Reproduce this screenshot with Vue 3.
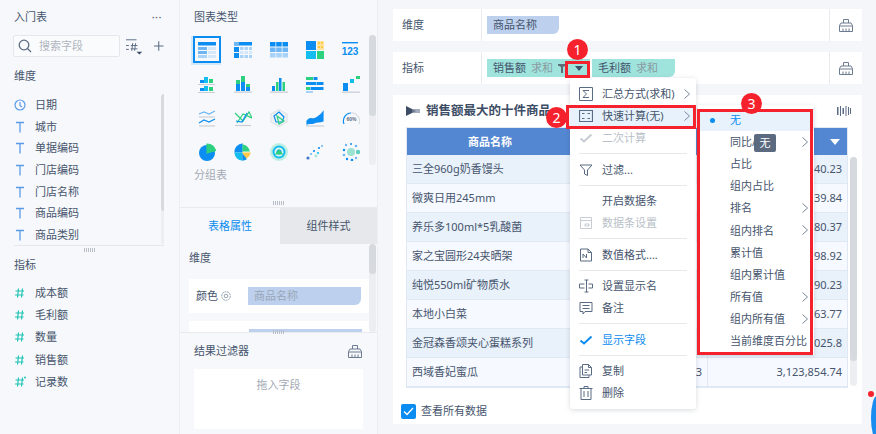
<script setup>
const B = '#0b8df2'
const L = '#a8d2f7'
const M = '#6db6f3'
const P = '#d5e8fa'
const G = '#2dd07f'
const C = '#14bdf0'
const Y = '#ffc94a'
const S = '#c9ced6'

const dims = ['日期', '城市', '单据编码', '门店编码', '门店名称', '商品编码', '商品类别']
const measures = ['成本额', '毛利额', '数量', '销售额', '记录数']

const charts = [
  { r: [[0, 1, 18, 3.5, B], [0, 6, 9, 3, M], [0, 10, 9, 3, M], [0, 14, 9, 3, L], [10, 6, 8, 3, P], [10, 10, 8, 3, P], [10, 14, 8, 3, P]] },
  { r: [[0, 1, 18, 3.5, B], [0, 1, 5, 3.5, M], [0, 6, 5, 5, B], [0, 12, 5, 5, B], [6, 6, 3.5, 3, L], [10.5, 6, 3.5, 3, L], [15, 6, 3, 3, L], [6, 10, 3.5, 3, P], [10.5, 10, 3.5, 3, P], [15, 10, 3, 3, P], [6, 14, 3.5, 3, L], [10.5, 14, 3.5, 3, L], [15, 14, 3, 3, L]] },
  { r: [[0, 1, 5.5, 4.5, B], [6.2, 1, 5.5, 4.5, B], [12.5, 1, 5.5, 4.5, B], [0, 6.5, 5.5, 4.5, M], [6.2, 6.5, 5.5, 4.5, M], [12.5, 6.5, 5.5, 4.5, M], [0, 12, 5.5, 4.5, L], [6.2, 12, 5.5, 4.5, L], [12.5, 12, 5.5, 4.5, L]] },
  { r: [[0, 0, 10, 9, B], [11, 0, 7, 9, '#ffe39a'], [12, 1, 2, 2, Y], [15, 1, 2, 2, Y], [12, 5, 2, 2, Y], [15, 5, 2, 2, Y], [0, 10, 10, 8, C], [11, 10, 7, 8, G]] },
  { r: [[0, 1, 16, 1.4, B]], t: '123' },
  { r: [[2, 5, 4, 3, B], [6, 2, 4, 6, C], [11, 4, 4, 4, G], [0, 9, 17, 1, S], [2, 13, 4, 3, B], [6, 11, 4, 5, C], [11, 12, 4, 4, G], [0, 17, 17, 1, S]] },
  { r: [[2, 9, 4, 7, B], [2, 5, 4, 4, G], [7, 7, 4, 9, B], [7, 1, 4, 6, G], [12, 12, 4, 4, B], [12, 9, 4, 3, G], [0, 16.5, 18, 1.3, S]] },
  { r: [[2, 11, 3, 5, B], [6, 7, 2.5, 9, G], [9, 3, 2.5, 13, B], [12.5, 7, 2.5, 9, G], [0, 16.5, 18, 1.3, S]] },
  { r: [[0, 2, 7, 3, G], [7.5, 2, 4, 3, B], [0, 7, 10, 3, B], [10.5, 7, 7, 3, B], [0, 12, 4, 3, G], [4.5, 12, 13, 3, B], [0, 16, 7, 2, L]] },
  { r: [[1, 8, 5, 8, B], [8, 4, 4, 4, C], [14, 1, 4, 3, G], [0, 16.5, 18, 1.3, S]] },
  { p: [['M1 5 L6 3 L11 5 L17 2', '#6db6f3', 'none'], ['M1 8 H17', S, 'none'], ['M1 14 L6 11 L11 13 L17 10', B, 'none'], ['M1 17 H17', S, 'none']] },
  { p: [['M1 4 L9 12 L15 3 L18 9 L9 5 L3 14', G, 'none'], ['M2 12 L8 13 L13 4', B, 'none'], ['M1 16.5 H17', S, 'none']] },
  { p: [['M9 0.5 L17 5 V13 L9 17.5 L1 13 V5 Z', '#dfe3e8', '#eef0f3'], ['M9 3 L14 8 L12 13 L6 13 L4 7 Z', B, 'none'], ['M7 7 L14 12 L9 15 Z', G, 'none']] },
  { p: [['M1 12 C4 7 7 12 10 9 C13 7 15 6 17 3 V12 C13 14 11 12 8 14 C5 15 3 14 1 15 Z', B, B], ['M0 17 H18', S, 'none']] },
  { p: [['M2 15 A8 8 0 0 1 9 4', B, 'none'], ['M9 4 A8 8 0 0 1 17 15', '#d8dde3', 'none']], t2: '60%' },
  { c: [[9, 10, 8, B]], p: [['M9 10 V1 A9 9 0 0 1 17.5 7.5 Z', G, G]] },
  { p: [['M8 1 V9 H1 A8 8 0 0 1 8 1 Z', B, B], ['M9 2 A8 8 0 0 1 15 8 H9 Z', G, G], ['M1 10 H8 V17 A8 8 0 0 1 1 10 Z', C, C], ['M9 10 H16 A7 7 0 0 1 12 15 Z', Y, Y], ['M9 12 L12 16 A6 6 0 0 1 9 17 Z', B, B]] },
  { c: [[9, 9, 9, '#bfeee4'], [9, 9, 6.5, C], [9, 9, 4.5, '#d9f5ee'], [9, 9, 2.5, B]], p: [['M9 7 L12 11 H6 Z', G, G]] },
  { c: [[2, 15, 1.6, '#3f79c9'], [5, 11, 1.1, M], [8, 8, 1.1, B], [10, 13, 1.4, '#a5e6d7'], [12, 10, 1.1, C], [13, 5, 1.1, B], [16, 3, 1.1, M]] },
  { c: [[9, 9, 4, '#9be2d3'], [4, 2, 1.2, M], [9, 1, 1, B], [14, 3, 1.3, M], [2, 7, 1.2, B], [16, 9, 2.2, '#5fd0c0'], [2, 12, 1.3, M], [5, 16, 1.2, B], [10, 17, 1.3, B], [14, 15, 1.2, M]] }
]

const rows = [
  ['三全960g奶香馒头', '', '40.23'],
  ['微爽日用245mm', '', '39.84'],
  ['养乐多100ml*5乳酸菌', '', '80.37'],
  ['家之宝圆形24夹晒架', '', '98.92'],
  ['纯悦550ml矿物质水', '', '90.23'],
  ['本地小白菜', '', '63.77'],
  ['金冠森香颂夹心蛋糕系列', '', '025.8'],
  ['西域香妃蜜瓜', '3', '3,123,854.74']
]

const menu = [
  { text: '汇总方式(求和)', icon: 'sum', more: true },
  { text: '快速计算(无)', icon: 'calc', more: true, active: true },
  { text: '二次计算', icon: 'check', off: true, line: true },
  { text: '过滤...', icon: 'filter', line: true },
  { text: '开启数据条' },
  { text: '数据条设置', icon: 'bar', off: true, line: true },
  { text: '数值格式....', icon: 'num', line: true },
  { text: '设置显示名', icon: 'name' },
  { text: '备注', icon: 'note', line: true },
  { text: '显示字段', icon: 'check', on: true, line: true },
  { text: '复制', icon: 'copy' },
  { text: '删除', icon: 'trash' }
]

const quick = [
  { text: '无', on: true },
  { text: '同比/', more: true },
  { text: '占比' },
  { text: '组内占比' },
  { text: '排名', more: true },
  { text: '组内排名', more: true },
  { text: '累计值' },
  { text: '组内累计值' },
  { text: '所有值', more: true },
  { text: '组内所有值', more: true },
  { text: '当前维度百分比' }
]
</script>

<template>
  <div class="app">
    <aside class="fields">
      <div class="head"><span>入门表</span><span class="dots">···</span></div>
      <div class="search-row">
        <div class="search">
          <svg width="14" height="14" viewBox="0 0 14 14" fill="none" stroke="#5a6b85" stroke-width="1.3"><circle cx="6" cy="6" r="4.8" /><path d="M9.5 9.5 L13 13" /></svg>
          <span>搜索字段</span>
        </div>
        <svg class="sort" width="18" height="18" viewBox="0 0 18 18" fill="none" stroke="#5a6b85"><path d="M0 2.5 H11 M0 8.5 H3 M0 12.5 H3 M7 6 L6 14 M10 6 L9 14 M5 8.5 H12 M5 12 H12" /><path d="M11 15 H17 L14 18 Z" fill="#3d4d66" stroke="none" /></svg>
        <svg width="12" height="12" viewBox="0 0 12 12" stroke="#5a6b85" stroke-width="1.1"><path d="M6 1 V11 M1 6 H11" /></svg>
      </div>
      <div class="group">维度</div>
      <div class="dim-box">
        <ul class="field-list">
          <li v-for="(d, i) in dims" :key="d">
            <svg v-if="i === 0" width="12" height="12" viewBox="0 0 12 12" fill="none" stroke="#5a9be8" stroke-width="1.2"><circle cx="6" cy="6" r="5" /><path d="M6 3 V6.5 L8 8" /></svg>
            <svg v-else width="12" height="12" viewBox="0 0 12 12" fill="none" stroke="#5a9be8" stroke-width="1.3"><path d="M2 1.5 H10 M6 1.5 V11.5" /></svg>
            <span>{{ d }}</span>
          </li>
        </ul>
        <div class="scroll left-scroll"><i></i></div>
      </div>
      <div class="grip"></div>
      <div class="group measure">指标</div>
      <ul class="field-list">
        <li v-for="(m, i) in measures" :key="m">
          <svg width="12" height="12" viewBox="0 0 12 12" fill="none" stroke="#1fc4b4" stroke-width="1.2"><path d="M4.5 1.5 L3.5 10.5 M8.5 1.5 L7.5 10.5 M1.5 4 H10 M1 8 H9.5" /><circle v-if="i === 4" cx="11" cy="1.5" r="1" fill="#1fc4b4" stroke="none" /></svg>
          <span>{{ m }}</span>
        </li>
      </ul>
    </aside>

    <section class="config">
      <div class="types">
        <div class="sub-title">图表类型</div>
        <div class="chart-grid">
          <div v-for="(c, i) in charts" :key="i" class="chart-cell" :class="{ picked: i === 0 }">
            <svg width="18" height="18" viewBox="0 0 18 18">
              <rect v-for="(r, j) in c.r || []" :key="j" :x="r[0]" :y="r[1]" :width="r[2]" :height="r[3]" :fill="r[4]" />
              <circle v-for="(o, j) in c.c || []" :key="'c' + j" :cx="o[0]" :cy="o[1]" :r="o[2]" :fill="o[3]" />
              <path v-for="(p, j) in c.p || []" :key="'p' + j" :d="p[0]" :stroke="p[1]" :fill="p[2]" stroke-width="1.2" />
              <text v-if="c.t" x="8" y="14" text-anchor="middle" class="chart-num">{{ c.t }}</text>
              <text v-if="c.t2" x="9.5" y="12" text-anchor="middle" class="chart-pct">{{ c.t2 }}</text>
            </svg>
          </div>
        </div>
        <div class="chart-name">分组表</div>
        <div class="scroll type-scroll"><i></i></div>
      </div>
      <div class="grip grip-mid"></div>
      <div class="tabs">
        <div class="tab on">表格属性</div>
        <div class="tab">组件样式</div>
      </div>
      <div class="props">
        <div class="prop-title">维度</div>
        <div class="prop-row">
          <span class="prop-label">颜色</span>
          <svg width="10" height="10" viewBox="0 0 10 10" fill="none" stroke="#9aa5b5"><circle cx="5" cy="5" r="4.3" stroke-dasharray="2 .6" /><circle cx="5" cy="5" r="1.8" /></svg>
          <span class="prop-chip">商品名称</span>
        </div>
        <div class="prop-row"><span class="prop-chip second"></span></div>
        <div class="scroll prop-scroll"><i></i></div>
      </div>
      <div class="result">
        <div class="grip grip-result"></div>
        <div class="result-head">
          <span>结果过滤器</span>
          <svg width="14" height="14" viewBox="0 0 14 14" fill="none" stroke="#6d7b90"><path d="M4.5 5 V1.5 H9.5 V5 M0.5 7.5 L2 5 H12 L13.5 7.5 V13.5 H0.5 Z M0.5 8 H13.5 M4 10.5 V13.5 M7 10.5 V13.5 M10 10.5 V13.5" /></svg>
        </div>
        <div class="drop">拖入字段</div>
      </div>
    </section>

    <main class="board">
      <div class="bar">
        <div class="bar-label">维度</div>
        <div class="bar-body"><span class="chip dim">商品名称</span></div>
        <div class="bar-tool">
          <svg width="14" height="14" viewBox="0 0 14 14" fill="none" stroke="#6d7b90"><path d="M4.5 5 V1.5 H9.5 V5 M0.5 7.5 L2 5 H12 L13.5 7.5 V13.5 H0.5 Z M0.5 8 H13.5 M4 10.5 V13.5 M7 10.5 V13.5 M10 10.5 V13.5" /></svg>
        </div>
      </div>
      <div class="bar">
        <div class="bar-label">指标</div>
        <div class="bar-body">
          <span class="chip teal first">销售额<em>求和</em>
            <svg width="8" height="9" viewBox="0 0 8 9"><path d="M0 0 H8 V1.5 L5 3 V9 H3 V3 L0 1.5 Z" fill="#5c6f78" /></svg>
            <svg class="caret" width="8" height="5" viewBox="0 0 8 5"><path d="M0 0 H8 L4 5 Z" fill="#3d4d66" /></svg>
          </span>
          <span class="chip teal second-chip">毛利额<em>求和</em></span>
        </div>
        <div class="bar-tool">
          <svg width="14" height="14" viewBox="0 0 14 14" fill="none" stroke="#6d7b90"><path d="M4.5 5 V1.5 H9.5 V5 M0.5 7.5 L2 5 H12 L13.5 7.5 V13.5 H0.5 Z M0.5 8 H13.5 M4 10.5 V13.5 M7 10.5 V13.5 M10 10.5 V13.5" /></svg>
        </div>
      </div>

      <div class="card">
        <div class="card-title">
          <svg width="14" height="10" viewBox="0 0 14 10"><path d="M0 0 L10 5 L0 10 Z" fill="#3d4d66" /><path d="M6 3 H14 V7 H6 Z" fill="#7c8aa0" opacity=".7" /></svg>
          <b>销售额最大的十件商品</b>
          <svg class="wave" width="14" height="10" viewBox="0 0 14 10" fill="#5a6b85"><path d="M0 1 H1.5 V9 H0 Z M3 0 H4 V10 H3 Z M5.5 2 H7 V8 H5.5 Z M8.5 0 H9.5 V10 H8.5 Z M11 1 H12 V9 H11 Z M13 2 H14 V8 H13 Z" /></svg>
        </div>
        <div class="table-wrap">
          <div class="table">
            <div class="th">商品名称</div>
            <div class="th"></div>
            <div class="th sort-th"><svg width="10" height="6" viewBox="0 0 10 6"><path d="M0 0 H10 L5 6 Z" fill="#fff" /></svg></div>
            <template v-for="(r, i) in rows" :key="i">
              <div class="td" :class="{ alt: i % 2 === 1 }">{{ r[0] }}</div>
              <div class="td num" :class="{ alt: i % 2 === 1 }">{{ r[1] }}</div>
              <div class="td num" :class="{ alt: i % 2 === 1 }">{{ r[2] }}</div>
            </template>
          </div>
          <div class="scroll table-scroll"><i></i></div>
        </div>
        <label class="see-all">
          <span class="box"><svg width="11" height="9" viewBox="0 0 11 9" fill="none" stroke="#fff" stroke-width="1.3"><path d="M1 4.5 L4 7.5 L10 1" /></svg></span>
          查看所有数据
        </label>
      </div>
    </main>

    <div class="menu">
      <template v-for="m in menu" :key="m.text">
        <div class="menu-item" :class="{ active: m.active, off: m.off, on: m.on }">
          <span class="menu-icon">
            <svg v-if="m.icon" width="14" height="14" viewBox="0 0 14 14" fill="none" stroke="currentColor">
              <path v-if="m.icon === 'sum'" d="M0.5 0.5 H13.5 V13.5 H0.5 Z M10 3.5 H4 L7.5 7 L4 10.5 H10" />
              <path v-if="m.icon === 'calc'" d="M0.5 1.5 H13.5 V12.5 H0.5 Z M3 4.5 H5.5 M8.5 4.5 H11 M3 9.5 H5.5 M8.5 9.5 H11" stroke-width="1.2" />
              <path v-if="m.icon === 'check'" d="M1.5 7.5 L5 10.5 L12.5 3.5" stroke-width="2" />
              <path v-if="m.icon === 'filter'" d="M1 2 H13 L8.5 7 V12.5 L5.5 11 V7 Z" />
              <path v-if="m.icon === 'bar'" d="M1.5 1.5 H12.5 V12.5 H1.5 Z M1.5 4.5 H12.5 M6 8 H10 V10 H6 Z" />
              <path v-if="m.icon === 'num'" d="M1.5 1 H9 L12.5 4.5 V13 H1.5 Z M9 1 V4.5 H12.5 M4 10 V6 L7.5 10 V6" />
              <path v-if="m.icon === 'name'" d="M0.5 5 H5.5 M0.5 9 H5.5 M0.5 5 V9 M7.5 1 V13 M5.5 1 H9.5 M5.5 13 H9.5 M9.5 5 H13.5 V9 H9.5" />
              <path v-if="m.icon === 'note'" d="M1 1.5 H13 V10.5 H6 L4 13 V10.5 H1 Z M3.5 4.5 H10.5 M3.5 7.5 H10.5" />
              <path v-if="m.icon === 'copy'" d="M3.5 0.5 H9.5 L12.5 3.5 V11 H3.5 Z M9.5 0.5 V3.5 H12.5 M3.5 3 H1 V13.5 H10 V11 M5.5 6 H10 M5.5 8.5 H8" />
              <path v-if="m.icon === 'trash'" d="M0.5 2.5 H13.5 M5 2.5 V0.5 H9 V2.5 M2 2.5 V13.5 H12 V2.5 M5 5 V11 M9 5 V11" />
            </svg>
          </span>
          <span>{{ m.text }}</span>
          <svg v-if="m.more" class="more" width="6" height="10" viewBox="0 0 6 10" fill="none" stroke="#7a8799"><path d="M0.5 0.5 L5.5 5 L0.5 9.5" /></svg>
        </div>
        <div v-if="m.line" class="menu-line"></div>
      </template>
    </div>

    <div class="submenu">
      <div v-for="q in quick" :key="q.text" class="sub-item" :class="{ on: q.on }">
        <i v-if="q.on" class="dot"></i>
        <span>{{ q.text }}</span>
        <svg v-if="q.more" class="more" width="6" height="10" viewBox="0 0 6 10" fill="none" stroke="#7a8799"><path d="M0.5 0.5 L5.5 5 L0.5 9.5" /></svg>
      </div>
    </div>
    <div class="tip">无</div>

    <div class="red r1"></div>
    <div class="red r2"></div>
    <div class="red r3"></div>
    <div class="badge b1">1</div>
    <div class="badge b2">2</div>
    <div class="badge b3">3</div>

    <div class="corner"><i></i></div>
  </div>
</template>

<style>
html,
body {
  margin: 0;
  background: #f5f6f9;
}
</style>

<style scoped>
.app {
  position: relative;
  display: grid;
  grid-template-columns: 180px 198px 1fr;
  width: 876px;
  height: 434px;
  overflow: hidden;
  background: #f5f6f9;
  color: #46556d;
  font: 11px/20px "Noto Sans", "Noto Sans CJK SC", sans-serif;
}

ul {
  margin: 0;
  padding: 0;
  list-style: none;
}

.fields {
  padding: 7px 15px 0 14px;
  background: #f7f8fb;
  border-right: 1px solid #eceef2;
  box-sizing: border-box;
}

.head {
  display: flex;
  justify-content: space-between;
  height: 20px;
}

.dots {
  letter-spacing: 0.5px;
  margin-right: 2px;
}

.search-row {
  display: flex;
  align-items: center;
  gap: 6px;
  margin-top: 8px;
  margin-left: -1px;
}

.search {
  display: flex;
  align-items: center;
  gap: 7px;
  width: 112px;
  height: 22px;
  padding-left: 4px;
  border: 1px solid #e4e7ec;
  border-radius: 2px;
  background: #fafbfc;
  box-sizing: border-box;
  color: #b0b6c0;
}

.sort {
  margin-right: 3px;
}

.group {
  margin-top: 9px;
  height: 20px;
}

.dim-box {
  position: relative;
  height: 151px;
  margin-top: 8px;
  border-bottom: 1px solid #e4e7ec;
  overflow: hidden;
}

.field-list li {
  display: flex;
  align-items: center;
  gap: 9px;
  height: 21.7px;
}

.measure + .field-list li {
  height: 22.2px;
}

.field-list svg {
  flex: none;
}

.scroll {
  position: absolute;
  width: 7px;
  border-radius: 4px;
  background: #eceef1;
}

.scroll i {
  display: block;
  width: 7px;
  border-radius: 4px;
  background: #d6d9de;
}

.left-scroll {
  top: 0;
  right: -4px;
  height: 151px;
}

.left-scroll i {
  height: 117px;
}

.grip {
  width: 11px;
  height: 4px;
  margin: 2px auto 0;
  background: repeating-linear-gradient(90deg, #b9bfc9 0 1px, transparent 1px 2px);
}

.measure {
  margin-top: 3px;
}

.measure + .field-list {
  margin-top: 7px;
}

.config {
  display: flex;
  flex-direction: column;
  height: 434px;
  background: #f7f8fb;
  border-right: 1px solid #eceef2;
  box-sizing: border-box;
}

.types {
  position: relative;
  height: 205px;
  padding: 7px 0 0 14px;
  box-sizing: border-box;
}

.sub-title {
  height: 20px;
}

.chart-grid {
  display: grid;
  grid-template-columns: repeat(5, 36px);
  grid-auto-rows: 34px;
  margin: 6px 0 0 -5px;
}

.chart-cell {
  display: flex;
  align-items: center;
  justify-content: center;
}

.chart-cell.picked {
  width: 28px;
  height: 27px;
  margin: 3px 0 0 4px;
  border: 2px solid #0a8cf0;
  box-shadow: -1px 1px 0 1px #d3e7fa;
  box-sizing: border-box;
}

.chart-num {
  font: 700 10px "Liberation Sans", sans-serif;
  fill: #0b8df2;
}

.chart-pct {
  font: 700 5px "Liberation Sans", sans-serif;
  fill: #5a6b85;
}

.chart-name {
  margin-top: -4px;
  color: #a3aab5;
  height: 20px;
}

.type-scroll {
  top: 35px;
  right: 1px;
  height: 130px;
}

.type-scroll i {
  height: 81px;
}

.grip-mid {
  margin-top: 0;
  margin-bottom: -4px;
  position: relative;
  top: -4px;
}

.tabs {
  display: grid;
  grid-template-columns: 100px 1fr;
  height: 37px;
  margin-top: 2px;
  border-top: 1px solid #e8eaee;
  box-sizing: border-box;
}

.tab {
  display: flex;
  align-items: center;
  justify-content: center;
  background: #e6e8eb;
}

.tab.on {
  background: #f7f8fb;
  color: #0a8cf0;
}

.props {
  position: relative;
  height: 88px;
  padding: 1px 0 0 9px;
  overflow: hidden;
  box-sizing: border-box;
}

.prop-title {
  height: 26px;
  line-height: 26px;
}

.prop-row {
  display: flex;
  align-items: center;
  gap: 3px;
  width: 180px;
  height: 34px;
  margin-top: 8px;
  margin-bottom: 7px;
  padding-left: 7px;
  background: #fff;
  box-sizing: border-box;
}

.prop-chip {
  width: 113px;
  height: 18px;
  margin-left: 14px;
  padding-left: 6px;
  border-radius: 0 0 6px 0;
  background: #bdd1ee;
  color: #9aa6b8;
  line-height: 18px;
  box-sizing: border-box;
}

.prop-chip.second {
  margin-left: 53px;
}

.prop-scroll {
  top: 0;
  right: 1px;
  height: 88px;
}

.prop-scroll i {
  height: 30px;
}

.result {
  flex: 1;
  padding: 0 14px;
  border-top: 1px solid #e8eaee;
  background: #f7f8fb;
}

.grip-result {
  position: relative;
  top: -5px;
}

.result-head {
  display: flex;
  align-items: center;
  justify-content: space-between;
  height: 20px;
  margin-top: 2px;
}

.result-head svg {
  margin-right: 1px;
}

.drop {
  height: 60px;
  margin-top: 8px;
  padding-top: 6px;
  background: #fff;
  color: #a3aab5;
  text-align: center;
  box-sizing: border-box;
}

.board {
  padding: 9px 14px 0 15px;
  min-width: 0;
}

.bar {
  display: flex;
  align-items: center;
  width: 469px;
  height: 32px;
  margin-bottom: 11px;
  background: #fff;
}

.bar-label {
  width: 89px;
  height: 32px;
  padding-left: 9px;
  line-height: 32px;
  border-right: 1px solid #e8eaee;
  box-sizing: border-box;
}

.bar-body {
  flex: 1;
  display: flex;
  align-items: center;
  padding-left: 5px;
  min-width: 0;
}

.bar-tool {
  display: flex;
  align-items: center;
  justify-content: center;
  width: 31px;
  height: 32px;
  margin-right: 1px;
  border-left: 1px solid #e8eaee;
}

.chip {
  display: inline-flex;
  align-items: center;
  height: 18px;
  padding-left: 6px;
  border-radius: 0 0 6px 0;
  box-sizing: border-box;
  white-space: nowrap;
}

.chip.dim {
  width: 72px;
  background: #bdd1ee;
}

.chip.teal {
  background: #9fe3dd;
}

.chip em {
  margin-left: 5px;
  font-style: normal;
  color: #8a9aa0;
}

.chip.first {
  width: 103px;
  border-radius: 0 0 6px 0;
}

.chip.first svg {
  margin-left: 5px;
  flex: none;
}

.chip.first .caret {
  margin-left: 9px;
}

.second-chip {
  width: 83px;
  margin-left: 2px;
}

.card {
  display: flex;
  flex-direction: column;
  width: 469px;
  height: 329px;
  padding: 5px 0 0 14px;
  background: #fff;
  box-sizing: border-box;
}

.card-title {
  display: flex;
  align-items: center;
  gap: 6px;
  height: 22px;
  margin-bottom: 6px;
  margin-left: -1px;
  width: 445px;
}

.card-title b {
  font-size: 12.5px;
  color: #3d4d66;
}

.wave {
  margin-left: auto;
}

.table-wrap {
  position: relative;
}

.table {
  display: grid;
  grid-template-columns: 166px 134px 140px;
  width: 440px;
  outline: 1px solid #e0e8f4;
}

.th {
  display: flex;
  align-items: center;
  justify-content: center;
  height: 27px;
  background: #5387d2;
  color: #fff;
  font-weight: 700;
}

.sort-th {
  justify-content: flex-end;
  padding-right: 7px;
}

.td {
  height: 29px;
  padding-left: 5px;
  line-height: 28px;
  background: #e9f1fb;
  border-bottom: 1px solid #e0e8f4;
  box-sizing: border-box;
  white-space: nowrap;
}

.td.alt {
  background: #f6f9ff;
}

.td.num {
  padding: 0 5px 0 0;
  text-align: right;
  border-left: 1px solid #e0e8f4;
}

.table-scroll {
  top: 29px;
  left: 443px;
  height: 229px;
}

.table-scroll i {
  height: 204px;
}

.see-all {
  display: flex;
  align-items: center;
  gap: 5px;
  margin: 14px 0 0 -6px;
}

.box {
  display: flex;
  align-items: center;
  justify-content: center;
  width: 15px;
  height: 15px;
  border-radius: 2px;
  background: #0a8cf0;
}

.menu {
  position: absolute;
  left: 570px;
  top: 78px;
  width: 126px;
  height: 331px;
  padding-top: 5px;
  border-radius: 3px;
  background: #fff;
  box-shadow: 0 1px 5px rgba(60, 70, 90, 0.2);
  box-sizing: border-box;
}

.menu-item {
  position: relative;
  display: flex;
  align-items: center;
  height: 22px;
  padding-left: 9px;
  white-space: nowrap;
}

.menu-item.active {
  background: #e8f2fc;
}

.menu-item.off {
  color: #b9bfc8;
}

.menu-item.on {
  color: #0a8cf0;
}

.menu-icon {
  display: flex;
  width: 23px;
  flex: none;
  color: #5a6b85;
}

.menu-item.off .menu-icon {
  color: #c7ccd3;
}

.menu-item.on .menu-icon {
  color: #0a8cf0;
}

.menu-line {
  height: 1px;
  margin: 4.25px 0 4.25px 9px;
  width: 108px;
  background: #e6e8ec;
}

.more {
  position: absolute;
  right: 6px;
  top: 6px;
}

.submenu {
  position: absolute;
  left: 698px;
  top: 105px;
  width: 116px;
  height: 250px;
  padding-top: 4px;
  background: #fff;
  box-shadow: 0 1px 4px rgba(60, 70, 90, 0.2);
  box-sizing: border-box;
}

.sub-item {
  position: relative;
  display: flex;
  align-items: center;
  height: 22.1px;
  padding-left: 32px;
  white-space: nowrap;
}

.sub-item.on {
  color: #0a8cf0;
  background: #e8f2fc;
}

.dot {
  position: absolute;
  left: 12px;
  top: 9px;
  width: 5px;
  height: 5px;
  border-radius: 50%;
  background: #0a8cf0;
}

.tip {
  position: absolute;
  left: 754px;
  top: 134px;
  width: 22px;
  height: 18px;
  border-radius: 2px;
  background: #5c6a80;
  color: #fff;
  line-height: 18px;
  text-align: center;
}

.red {
  position: absolute;
  border: 3px solid #f5222d;
  box-sizing: border-box;
}

.r1 {
  left: 565px;
  top: 61px;
  width: 25px;
  height: 17px;
}

.r2 {
  left: 566px;
  top: 105px;
  width: 130px;
  height: 24px;
}

.r3 {
  left: 697px;
  top: 109px;
  width: 116px;
  height: 246px;
}

.badge {
  position: absolute;
  width: 21px;
  height: 21px;
  border-radius: 50%;
  background: #f5222d;
  color: #fff;
  font-size: 14px;
  line-height: 21px;
  text-align: center;
}

.b1 {
  left: 567px;
  top: 39px;
}

.b2 {
  left: 546px;
  top: 107px;
}

.b3 {
  left: 741px;
  top: 93px;
}

.corner {
  position: absolute;
  left: 871px;
  top: 396px;
  width: 12px;
  height: 44px;
  border-radius: 50%;
  background: #1a8cf0;
}

.corner i {
  position: absolute;
  left: -3px;
  top: -5px;
  width: 6px;
  height: 6px;
  border-radius: 50%;
  background: #f5222d;
}
</style>
